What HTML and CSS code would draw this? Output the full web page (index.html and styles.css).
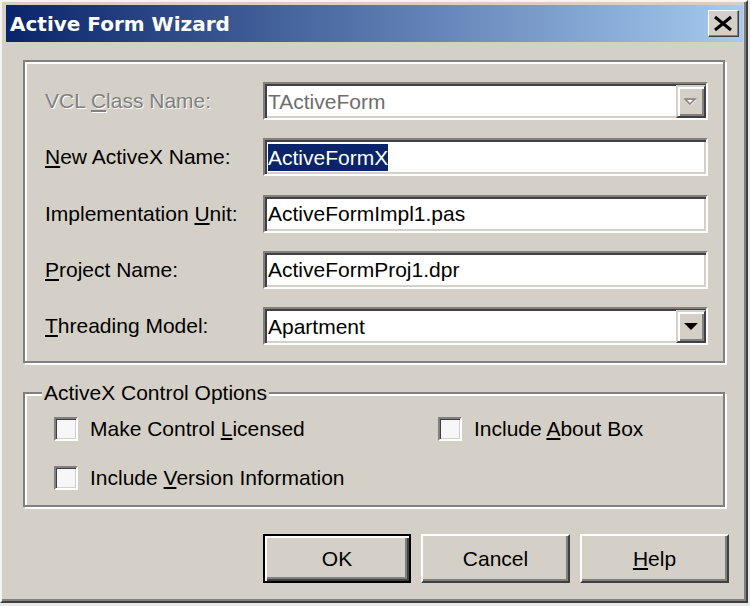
FILE: index.html
```html
<!DOCTYPE html>
<html lang="en">
<head>
<meta charset="utf-8">
<title>Active Form Wizard</title>
<link rel="stylesheet" href="styles.css">
</head>
<body>
<div class="window">
  <div class="titlebar">
    <span class="title">Active Form Wizard</span>
    <button class="close" aria-label="Close">
      <svg width="29" height="25" viewBox="0 0 29 25"><path d="M6 6 L22 19 M22 6 L6 19" stroke="#000" stroke-width="3" fill="none"/></svg>
    </button>
  </div>
  <div class="client">
    <div class="panel">
      <div class="form">
        <span class="lbl disabled">VCL <u>C</u>lass Name:</span>
        <div class="field combo">
          <span class="val muted">TActiveForm</span>
          <span class="drop"><svg width="14" height="8" viewBox="0 0 14 8"><path d="M2 2 H12 L7 7 Z" fill="#fff"/><path d="M1 1 H11 L6 6 Z" fill="none" stroke="#808080" stroke-width="1.5"/></svg></span>
        </div>

        <span class="lbl"><u>N</u>ew ActiveX Name:</span>
        <div class="field"><span class="val"><span class="sel">ActiveFormX</span></span></div>

        <span class="lbl">Implementation <u>U</u>nit:</span>
        <div class="field"><span class="val">ActiveFormImpl1.pas</span></div>

        <span class="lbl"><u>P</u>roject Name:</span>
        <div class="field"><span class="val">ActiveFormProj1.dpr</span></div>

        <span class="lbl"><u>T</u>hreading Model:</span>
        <div class="field combo">
          <span class="val">Apartment</span>
          <span class="drop"><svg width="14" height="8" viewBox="0 0 14 8"><path d="M0 0 H14 L7 7 Z" fill="#000"/></svg></span>
        </div>
      </div>
    </div>

    <div class="group">
      <span class="legend">ActiveX Control Options</span>
      <div class="checks">
        <label class="check"><span class="box"></span><span>Make Control <u>L</u>icensed</span></label>
        <label class="check"><span class="box"></span><span>Include <u>A</u>bout Box</span></label>
        <label class="check"><span class="box"></span><span>Include <u>V</u>ersion Information</span></label>
      </div>
    </div>

    <div class="buttons">
      <button class="btn default">OK</button>
      <button class="btn">Cancel</button>
      <button class="btn"><u>H</u>elp</button>
    </div>
  </div>
</div>
</body>
</html>
```
FILE: styles.css
```css
html, body {
  margin: 0;
  padding: 0;
}
body {
  background: #e9e9e9;
  font-family: "Liberation Sans", Arial, sans-serif;
  font-size: 21px;
  color: #000;
}
u { text-decoration-thickness: 2px; text-underline-offset: 2px; }

.window {
  width: 748px;
  height: 603px;
  box-sizing: border-box;
  background: #d4d0c8;
  border-style: solid;
  border-width: 2px;
  border-color: #f4f4f2 #404040 #404040 #f4f4f2;
  box-shadow: inset -2px -2px 0 #808080;
  padding: 3px 3px 0 4px;
  display: flex;
  flex-direction: column;
}

.titlebar {
  height: 37px;
  display: flex;
  align-items: center;
  padding: 0 4px;
  background: linear-gradient(to right, #0a246a, #a6caf0);
}
.title {
  flex: 1;
  font-family: "DejaVu Sans", Verdana, sans-serif;
  font-weight: bold;
  font-size: 20px;
  color: #fff;
  padding-top: 1px;
}
.close {
  width: 31px;
  height: 27px;
  padding: 0;
  margin: 0;
  background: #d4d0c8;
  border: 1px solid;
  border-color: #fff #404040 #404040 #fff;
  box-shadow: inset -1px -1px 0 #808080;
  display: flex;
  align-items: center;
  justify-content: center;
}

.client {
  padding: 18px 18px 0 17px;
}

.panel {
  border: 2px solid #808080;
  box-shadow: inset 2px 2px 0 #fff, 2px 2px 0 #fff;
  padding: 20px 15px 16px 20px;
}
.form {
  display: grid;
  grid-template-columns: 218px 1fr;
  row-gap: 18.25px;
  align-items: center;
}
.lbl {
  white-space: nowrap;
}
.lbl.disabled {
  color: #808080;
  text-shadow: 1px 1px 0 #fff;
}

.field {
  height: 38px;
  box-sizing: border-box;
  background: #fff;
  border: 2px solid;
  border-color: #808080 #fff #fff #808080;
  box-shadow: inset 2px 2px 0 #404040, inset -2px -2px 0 #d4d0c8;
  display: flex;
  align-items: center;
  padding-left: 3px;
}
.val {
  white-space: nowrap;
  padding-top: 1px;
}
.val.muted { color: #6e6e6e; }
.sel {
  background: #0a246a;
  color: #fff;
  padding: 2px 0;
}
.combo {
  align-items: stretch;
}
.combo .val {
  align-self: center;
}
.drop {
  margin-left: auto;
  width: 30px;
  margin-top: 1px;
  margin-bottom: 0;
  box-sizing: border-box;
  background: #d4d0c8;
  border: 2px solid;
  border-color: #d4d0c8 #404040 #404040 #d4d0c8;
  box-shadow: inset 2px 2px 0 #fff, inset -2px -2px 0 #808080;
  display: flex;
  align-items: center;
  justify-content: center;
}

.group {
  position: relative;
  margin-top: 29px;
  border: 2px solid #808080;
  box-shadow: inset 2px 2px 0 #fff, 2px 2px 0 #fff;
  padding: 23px 10px 15px 29px;
}
.legend {
  position: absolute;
  top: -13px;
  left: 17px;
  padding: 0 2px;
  line-height: 24px;
  background: #d4d0c8;
}
.checks {
  display: grid;
  grid-template-columns: 384px 1fr;
  row-gap: 25px;
}
.check {
  display: flex;
  align-items: center;
  gap: 12px;
  height: 24px;
  white-space: nowrap;
}
.box {
  width: 24px;
  height: 24px;
  box-sizing: border-box;
  background: #f7f7f7;
  border: 2px solid;
  border-color: #808080 #fff #fff #808080;
  box-shadow: inset 1px 1px 0 #404040, inset -1px -1px 0 #d4d0c8;
}

.buttons {
  display: flex;
  justify-content: flex-end;
  gap: 10px;
  margin-top: 27px;
  margin-right: -4px;
}
.btn {
  width: 149px;
  height: 49px;
  box-sizing: border-box;
  margin: 0;
  padding: 0;
  font-family: "Liberation Sans", Arial, sans-serif;
  font-size: 21px;
  color: #000;
  background: #d4d0c8;
  border: 2px solid;
  border-color: #fff #404040 #404040 #fff;
  box-shadow: inset -2px -2px 0 #808080;
}
.btn.default {
  width: 148px;
  border: 2px solid #000;
  box-shadow: inset 2px 2px 0 #fff, inset -2px -2px 0 #404040, inset -4px -4px 0 #808080;
}
```
